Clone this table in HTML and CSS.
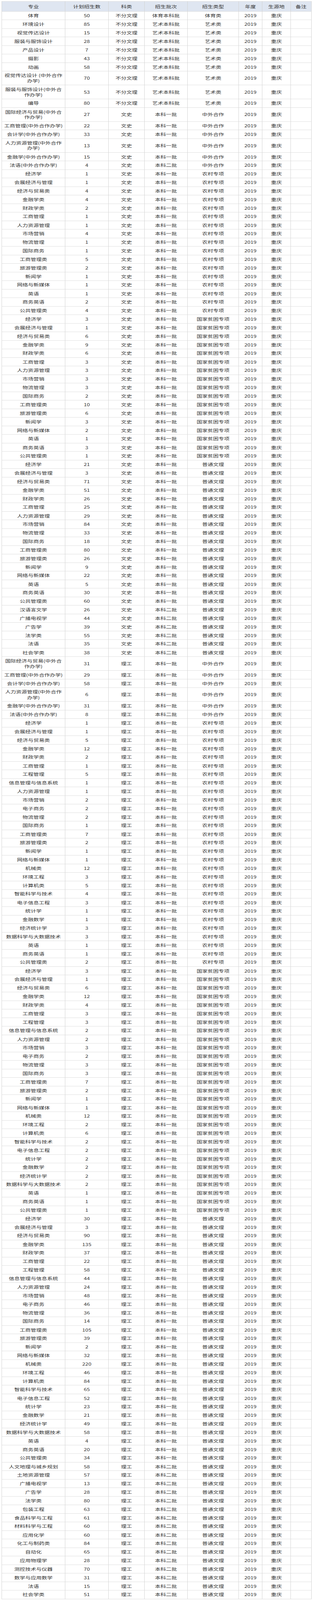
FILE: index.html
```html
<!DOCTYPE html>
<html lang="zh-CN">
<head>
<meta charset="utf-8">
<title>招生计划</title>
<link rel="stylesheet" href="styles.css">
</head>
<body>
<div class="frame">
<div class="sheet">
<table class="plan">
<colgroup>
<col class="c-major"><col class="c-num"><col class="c-cat"><col class="c-batch"><col class="c-type"><col class="c-year"><col class="c-src"><col class="c-note">
</colgroup>
<thead>
<tr><th>专业</th><th>计划招生数</th><th>科类</th><th>招生批次</th><th>招生类型</th><th>年度</th><th>生源地</th><th>备注</th></tr>
</thead>
<tbody>
<tr><td>体育</td><td>50</td><td>不分文理</td><td>体育本科批</td><td>体育类</td><td>2019</td><td>重庆</td><td></td></tr>
<tr><td>环境设计</td><td>85</td><td>不分文理</td><td>艺术本科批</td><td>艺术类</td><td>2019</td><td>重庆</td><td></td></tr>
<tr><td>视觉传达设计</td><td>15</td><td>不分文理</td><td>艺术本科批</td><td>艺术类</td><td>2019</td><td>重庆</td><td></td></tr>
<tr><td>服装与服饰设计</td><td>28</td><td>不分文理</td><td>艺术本科批</td><td>艺术类</td><td>2019</td><td>重庆</td><td></td></tr>
<tr><td>产品设计</td><td>7</td><td>不分文理</td><td>艺术本科批</td><td>艺术类</td><td>2019</td><td>重庆</td><td></td></tr>
<tr><td>摄影</td><td>43</td><td>不分文理</td><td>艺术本科批</td><td>艺术类</td><td>2019</td><td>重庆</td><td></td></tr>
<tr><td>动画</td><td>58</td><td>不分文理</td><td>艺术本科批</td><td>艺术类</td><td>2019</td><td>重庆</td><td></td></tr>
<tr><td>视觉传达设计 (中外合作办学)</td><td>70</td><td>不分文理</td><td>艺术本科批</td><td>艺术类</td><td>2019</td><td>重庆</td><td></td></tr>
<tr><td>服装与服饰设计(中外合作办学)</td><td>53</td><td>不分文理</td><td>艺术本科批</td><td>艺术类</td><td>2019</td><td>重庆</td><td></td></tr>
<tr><td>编导</td><td>80</td><td>不分文理</td><td>艺术本科批</td><td>艺术类</td><td>2019</td><td>重庆</td><td></td></tr>
<tr><td>国际经济与贸易(中外合作办学)</td><td>27</td><td>文史</td><td>本科一批</td><td>中外合作</td><td>2019</td><td>重庆</td><td></td></tr>
<tr><td>工商管理(中外合作办学)</td><td>22</td><td>文史</td><td>本科一批</td><td>中外合作</td><td>2019</td><td>重庆</td><td></td></tr>
<tr><td>会计学(中外合作办学)</td><td>33</td><td>文史</td><td>本科一批</td><td>中外合作</td><td>2019</td><td>重庆</td><td></td></tr>
<tr><td>人力资源管理(中外合作办学)</td><td>13</td><td>文史</td><td>本科一批</td><td>中外合作</td><td>2019</td><td>重庆</td><td></td></tr>
<tr><td>金融学(中外合作办学)</td><td>15</td><td>文史</td><td>本科一批</td><td>中外合作</td><td>2019</td><td>重庆</td><td></td></tr>
<tr><td>法语(中外合作办学)</td><td>4</td><td>文史</td><td>本科二批</td><td>中外合作</td><td>2019</td><td>重庆</td><td></td></tr>
<tr><td>经济学</td><td>1</td><td>文史</td><td>本科一批</td><td>农村专项</td><td>2019</td><td>重庆</td><td></td></tr>
<tr><td>会展经济与管理</td><td>1</td><td>文史</td><td>本科一批</td><td>农村专项</td><td>2019</td><td>重庆</td><td></td></tr>
<tr><td>经济与贸易类</td><td>4</td><td>文史</td><td>本科一批</td><td>农村专项</td><td>2019</td><td>重庆</td><td></td></tr>
<tr><td>金融学类</td><td>4</td><td>文史</td><td>本科一批</td><td>农村专项</td><td>2019</td><td>重庆</td><td></td></tr>
<tr><td>财政学类</td><td>2</td><td>文史</td><td>本科一批</td><td>农村专项</td><td>2019</td><td>重庆</td><td></td></tr>
<tr><td>工商管理</td><td>1</td><td>文史</td><td>本科一批</td><td>农村专项</td><td>2019</td><td>重庆</td><td></td></tr>
<tr><td>人力资源管理</td><td>1</td><td>文史</td><td>本科一批</td><td>农村专项</td><td>2019</td><td>重庆</td><td></td></tr>
<tr><td>市场营销</td><td>4</td><td>文史</td><td>本科一批</td><td>农村专项</td><td>2019</td><td>重庆</td><td></td></tr>
<tr><td>物流管理</td><td>1</td><td>文史</td><td>本科一批</td><td>农村专项</td><td>2019</td><td>重庆</td><td></td></tr>
<tr><td>国际商务</td><td>1</td><td>文史</td><td>本科一批</td><td>农村专项</td><td>2019</td><td>重庆</td><td></td></tr>
<tr><td>工商管理类</td><td>5</td><td>文史</td><td>本科一批</td><td>农村专项</td><td>2019</td><td>重庆</td><td></td></tr>
<tr><td>旅游管理类</td><td>2</td><td>文史</td><td>本科一批</td><td>农村专项</td><td>2019</td><td>重庆</td><td></td></tr>
<tr><td>新闻学</td><td>1</td><td>文史</td><td>本科一批</td><td>农村专项</td><td>2019</td><td>重庆</td><td></td></tr>
<tr><td>网络与新媒体</td><td>1</td><td>文史</td><td>本科一批</td><td>农村专项</td><td>2019</td><td>重庆</td><td></td></tr>
<tr><td>英语</td><td>1</td><td>文史</td><td>本科一批</td><td>农村专项</td><td>2019</td><td>重庆</td><td></td></tr>
<tr><td>商务英语</td><td>2</td><td>文史</td><td>本科一批</td><td>农村专项</td><td>2019</td><td>重庆</td><td></td></tr>
<tr><td>公共管理类</td><td>4</td><td>文史</td><td>本科一批</td><td>农村专项</td><td>2019</td><td>重庆</td><td></td></tr>
<tr><td>经济学</td><td>3</td><td>文史</td><td>本科一批</td><td>国家贫困专项</td><td>2019</td><td>重庆</td><td></td></tr>
<tr><td>会展经济与管理</td><td>1</td><td>文史</td><td>本科一批</td><td>国家贫困专项</td><td>2019</td><td>重庆</td><td></td></tr>
<tr><td>经济与贸易类</td><td>6</td><td>文史</td><td>本科一批</td><td>国家贫困专项</td><td>2019</td><td>重庆</td><td></td></tr>
<tr><td>金融学类</td><td>9</td><td>文史</td><td>本科一批</td><td>国家贫困专项</td><td>2019</td><td>重庆</td><td></td></tr>
<tr><td>财政学类</td><td>6</td><td>文史</td><td>本科一批</td><td>国家贫困专项</td><td>2019</td><td>重庆</td><td></td></tr>
<tr><td>工商管理</td><td>3</td><td>文史</td><td>本科一批</td><td>国家贫困专项</td><td>2019</td><td>重庆</td><td></td></tr>
<tr><td>人力资源管理</td><td>3</td><td>文史</td><td>本科一批</td><td>国家贫困专项</td><td>2019</td><td>重庆</td><td></td></tr>
<tr><td>市场营销</td><td>3</td><td>文史</td><td>本科一批</td><td>国家贫困专项</td><td>2019</td><td>重庆</td><td></td></tr>
<tr><td>物流管理</td><td>3</td><td>文史</td><td>本科一批</td><td>国家贫困专项</td><td>2019</td><td>重庆</td><td></td></tr>
<tr><td>国际商务</td><td>2</td><td>文史</td><td>本科一批</td><td>国家贫困专项</td><td>2019</td><td>重庆</td><td></td></tr>
<tr><td>工商管理类</td><td>10</td><td>文史</td><td>本科一批</td><td>国家贫困专项</td><td>2019</td><td>重庆</td><td></td></tr>
<tr><td>旅游管理类</td><td>6</td><td>文史</td><td>本科一批</td><td>国家贫困专项</td><td>2019</td><td>重庆</td><td></td></tr>
<tr><td>新闻学</td><td>3</td><td>文史</td><td>本科一批</td><td>国家贫困专项</td><td>2019</td><td>重庆</td><td></td></tr>
<tr><td>网络与新媒体</td><td>2</td><td>文史</td><td>本科一批</td><td>国家贫困专项</td><td>2019</td><td>重庆</td><td></td></tr>
<tr><td>英语</td><td>1</td><td>文史</td><td>本科一批</td><td>国家贫困专项</td><td>2019</td><td>重庆</td><td></td></tr>
<tr><td>商务英语</td><td>3</td><td>文史</td><td>本科一批</td><td>国家贫困专项</td><td>2019</td><td>重庆</td><td></td></tr>
<tr><td>公共管理类</td><td>1</td><td>文史</td><td>本科一批</td><td>国家贫困专项</td><td>2019</td><td>重庆</td><td></td></tr>
<tr><td>经济学</td><td>21</td><td>文史</td><td>本科一批</td><td>普通文理</td><td>2019</td><td>重庆</td><td></td></tr>
<tr><td>会展经济与管理</td><td>3</td><td>文史</td><td>本科一批</td><td>普通文理</td><td>2019</td><td>重庆</td><td></td></tr>
<tr><td>经济与贸易类</td><td>71</td><td>文史</td><td>本科一批</td><td>普通文理</td><td>2019</td><td>重庆</td><td></td></tr>
<tr><td>金融学类</td><td>51</td><td>文史</td><td>本科一批</td><td>普通文理</td><td>2019</td><td>重庆</td><td></td></tr>
<tr><td>财政学类</td><td>26</td><td>文史</td><td>本科一批</td><td>普通文理</td><td>2019</td><td>重庆</td><td></td></tr>
<tr><td>工商管理</td><td>25</td><td>文史</td><td>本科一批</td><td>普通文理</td><td>2019</td><td>重庆</td><td></td></tr>
<tr><td>人力资源管理</td><td>29</td><td>文史</td><td>本科一批</td><td>普通文理</td><td>2019</td><td>重庆</td><td></td></tr>
<tr><td>市场营销</td><td>84</td><td>文史</td><td>本科一批</td><td>普通文理</td><td>2019</td><td>重庆</td><td></td></tr>
<tr><td>物流管理</td><td>33</td><td>文史</td><td>本科一批</td><td>普通文理</td><td>2019</td><td>重庆</td><td></td></tr>
<tr><td>国际商务</td><td>18</td><td>文史</td><td>本科一批</td><td>普通文理</td><td>2019</td><td>重庆</td><td></td></tr>
<tr><td>工商管理类</td><td>80</td><td>文史</td><td>本科一批</td><td>普通文理</td><td>2019</td><td>重庆</td><td></td></tr>
<tr><td>旅游管理类</td><td>26</td><td>文史</td><td>本科一批</td><td>普通文理</td><td>2019</td><td>重庆</td><td></td></tr>
<tr><td>新闻学</td><td>9</td><td>文史</td><td>本科一批</td><td>普通文理</td><td>2019</td><td>重庆</td><td></td></tr>
<tr><td>网络与新媒体</td><td>22</td><td>文史</td><td>本科一批</td><td>普通文理</td><td>2019</td><td>重庆</td><td></td></tr>
<tr><td>英语</td><td>5</td><td>文史</td><td>本科一批</td><td>普通文理</td><td>2019</td><td>重庆</td><td></td></tr>
<tr><td>商务英语</td><td>30</td><td>文史</td><td>本科一批</td><td>普通文理</td><td>2019</td><td>重庆</td><td></td></tr>
<tr><td>公共管理类</td><td>60</td><td>文史</td><td>本科一批</td><td>普通文理</td><td>2019</td><td>重庆</td><td></td></tr>
<tr><td>汉语言文学</td><td>26</td><td>文史</td><td>本科二批</td><td>普通文理</td><td>2019</td><td>重庆</td><td></td></tr>
<tr><td>广播电视学</td><td>44</td><td>文史</td><td>本科二批</td><td>普通文理</td><td>2019</td><td>重庆</td><td></td></tr>
<tr><td>广告学</td><td>39</td><td>文史</td><td>本科二批</td><td>普通文理</td><td>2019</td><td>重庆</td><td></td></tr>
<tr><td>法学类</td><td>55</td><td>文史</td><td>本科二批</td><td>普通文理</td><td>2019</td><td>重庆</td><td></td></tr>
<tr><td>法语</td><td>35</td><td>文史</td><td>本科二批</td><td>普通文理</td><td>2019</td><td>重庆</td><td></td></tr>
<tr><td>社会学类</td><td>38</td><td>文史</td><td>本科二批</td><td>普通文理</td><td>2019</td><td>重庆</td><td></td></tr>
<tr><td>国际经济与贸易(中外合作办学)</td><td>31</td><td>理工</td><td>本科一批</td><td>中外合作</td><td>2019</td><td>重庆</td><td></td></tr>
<tr><td>工商管理(中外合作办学)</td><td>29</td><td>理工</td><td>本科一批</td><td>中外合作</td><td>2019</td><td>重庆</td><td></td></tr>
<tr><td>会计学(中外合作办学)</td><td>58</td><td>理工</td><td>本科一批</td><td>中外合作</td><td>2019</td><td>重庆</td><td></td></tr>
<tr><td>人力资源管理(中外合作办学)</td><td>6</td><td>理工</td><td>本科一批</td><td>中外合作</td><td>2019</td><td>重庆</td><td></td></tr>
<tr><td>金融学(中外合作办学)</td><td>31</td><td>理工</td><td>本科一批</td><td>中外合作</td><td>2019</td><td>重庆</td><td></td></tr>
<tr><td>法语(中外合作办学)</td><td>8</td><td>理工</td><td>本科二批</td><td>中外合作</td><td>2019</td><td>重庆</td><td></td></tr>
<tr><td>经济学</td><td>1</td><td>理工</td><td>本科一批</td><td>农村专项</td><td>2019</td><td>重庆</td><td></td></tr>
<tr><td>会展经济与管理</td><td>1</td><td>理工</td><td>本科一批</td><td>农村专项</td><td>2019</td><td>重庆</td><td></td></tr>
<tr><td>经济与贸易类</td><td>5</td><td>理工</td><td>本科一批</td><td>农村专项</td><td>2019</td><td>重庆</td><td></td></tr>
<tr><td>金融学类</td><td>12</td><td>理工</td><td>本科一批</td><td>农村专项</td><td>2019</td><td>重庆</td><td></td></tr>
<tr><td>财政学类</td><td>2</td><td>理工</td><td>本科一批</td><td>农村专项</td><td>2019</td><td>重庆</td><td></td></tr>
<tr><td>工商管理</td><td>1</td><td>理工</td><td>本科一批</td><td>农村专项</td><td>2019</td><td>重庆</td><td></td></tr>
<tr><td>工程管理</td><td>5</td><td>理工</td><td>本科一批</td><td>农村专项</td><td>2019</td><td>重庆</td><td></td></tr>
<tr><td>信息管理与信息系统</td><td>1</td><td>理工</td><td>本科一批</td><td>农村专项</td><td>2019</td><td>重庆</td><td></td></tr>
<tr><td>人力资源管理</td><td>1</td><td>理工</td><td>本科一批</td><td>农村专项</td><td>2019</td><td>重庆</td><td></td></tr>
<tr><td>市场营销</td><td>2</td><td>理工</td><td>本科一批</td><td>农村专项</td><td>2019</td><td>重庆</td><td></td></tr>
<tr><td>电子商务</td><td>2</td><td>理工</td><td>本科一批</td><td>农村专项</td><td>2019</td><td>重庆</td><td></td></tr>
<tr><td>物流管理</td><td>2</td><td>理工</td><td>本科一批</td><td>农村专项</td><td>2019</td><td>重庆</td><td></td></tr>
<tr><td>国际商务</td><td>1</td><td>理工</td><td>本科一批</td><td>农村专项</td><td>2019</td><td>重庆</td><td></td></tr>
<tr><td>工商管理类</td><td>7</td><td>理工</td><td>本科一批</td><td>农村专项</td><td>2019</td><td>重庆</td><td></td></tr>
<tr><td>旅游管理类</td><td>2</td><td>理工</td><td>本科一批</td><td>农村专项</td><td>2019</td><td>重庆</td><td></td></tr>
<tr><td>新闻学</td><td>1</td><td>理工</td><td>本科一批</td><td>农村专项</td><td>2019</td><td>重庆</td><td></td></tr>
<tr><td>网络与新媒体</td><td>1</td><td>理工</td><td>本科一批</td><td>农村专项</td><td>2019</td><td>重庆</td><td></td></tr>
<tr><td>机械类</td><td>12</td><td>理工</td><td>本科一批</td><td>农村专项</td><td>2019</td><td>重庆</td><td></td></tr>
<tr><td>环境工程</td><td>3</td><td>理工</td><td>本科一批</td><td>农村专项</td><td>2019</td><td>重庆</td><td></td></tr>
<tr><td>计算机类</td><td>5</td><td>理工</td><td>本科一批</td><td>农村专项</td><td>2019</td><td>重庆</td><td></td></tr>
<tr><td>智能科学与技术</td><td>4</td><td>理工</td><td>本科一批</td><td>农村专项</td><td>2019</td><td>重庆</td><td></td></tr>
<tr><td>电子信息工程</td><td>3</td><td>理工</td><td>本科一批</td><td>农村专项</td><td>2019</td><td>重庆</td><td></td></tr>
<tr><td>统计学</td><td>1</td><td>理工</td><td>本科一批</td><td>农村专项</td><td>2019</td><td>重庆</td><td></td></tr>
<tr><td>金融数学</td><td>1</td><td>理工</td><td>本科一批</td><td>农村专项</td><td>2019</td><td>重庆</td><td></td></tr>
<tr><td>经济统计学</td><td>3</td><td>理工</td><td>本科一批</td><td>农村专项</td><td>2019</td><td>重庆</td><td></td></tr>
<tr><td>数据科学与大数据技术</td><td>3</td><td>理工</td><td>本科一批</td><td>农村专项</td><td>2019</td><td>重庆</td><td></td></tr>
<tr><td>英语</td><td>1</td><td>理工</td><td>本科一批</td><td>农村专项</td><td>2019</td><td>重庆</td><td></td></tr>
<tr><td>商务英语</td><td>1</td><td>理工</td><td>本科一批</td><td>农村专项</td><td>2019</td><td>重庆</td><td></td></tr>
<tr><td>公共管理类</td><td>2</td><td>理工</td><td>本科一批</td><td>农村专项</td><td>2019</td><td>重庆</td><td></td></tr>
<tr><td>经济学</td><td>3</td><td>理工</td><td>本科一批</td><td>国家贫困专项</td><td>2019</td><td>重庆</td><td></td></tr>
<tr><td>会展经济与管理</td><td>1</td><td>理工</td><td>本科一批</td><td>国家贫困专项</td><td>2019</td><td>重庆</td><td></td></tr>
<tr><td>经济与贸易类</td><td>6</td><td>理工</td><td>本科一批</td><td>国家贫困专项</td><td>2019</td><td>重庆</td><td></td></tr>
<tr><td>金融学类</td><td>12</td><td>理工</td><td>本科一批</td><td>国家贫困专项</td><td>2019</td><td>重庆</td><td></td></tr>
<tr><td>财政学类</td><td>4</td><td>理工</td><td>本科一批</td><td>国家贫困专项</td><td>2019</td><td>重庆</td><td></td></tr>
<tr><td>工商管理</td><td>3</td><td>理工</td><td>本科一批</td><td>国家贫困专项</td><td>2019</td><td>重庆</td><td></td></tr>
<tr><td>工程管理</td><td>3</td><td>理工</td><td>本科一批</td><td>国家贫困专项</td><td>2019</td><td>重庆</td><td></td></tr>
<tr><td>信息管理与信息系统</td><td>2</td><td>理工</td><td>本科一批</td><td>国家贫困专项</td><td>2019</td><td>重庆</td><td></td></tr>
<tr><td>人力资源管理</td><td>2</td><td>理工</td><td>本科一批</td><td>国家贫困专项</td><td>2019</td><td>重庆</td><td></td></tr>
<tr><td>市场营销</td><td>3</td><td>理工</td><td>本科一批</td><td>国家贫困专项</td><td>2019</td><td>重庆</td><td></td></tr>
<tr><td>电子商务</td><td>2</td><td>理工</td><td>本科一批</td><td>国家贫困专项</td><td>2019</td><td>重庆</td><td></td></tr>
<tr><td>物流管理</td><td>3</td><td>理工</td><td>本科一批</td><td>国家贫困专项</td><td>2019</td><td>重庆</td><td></td></tr>
<tr><td>国际商务</td><td>3</td><td>理工</td><td>本科一批</td><td>国家贫困专项</td><td>2019</td><td>重庆</td><td></td></tr>
<tr><td>工商管理类</td><td>7</td><td>理工</td><td>本科一批</td><td>国家贫困专项</td><td>2019</td><td>重庆</td><td></td></tr>
<tr><td>旅游管理类</td><td>2</td><td>理工</td><td>本科一批</td><td>国家贫困专项</td><td>2019</td><td>重庆</td><td></td></tr>
<tr><td>新闻学</td><td>1</td><td>理工</td><td>本科一批</td><td>国家贫困专项</td><td>2019</td><td>重庆</td><td></td></tr>
<tr><td>网络与新媒体</td><td>1</td><td>理工</td><td>本科一批</td><td>国家贫困专项</td><td>2019</td><td>重庆</td><td></td></tr>
<tr><td>机械类</td><td>12</td><td>理工</td><td>本科一批</td><td>国家贫困专项</td><td>2019</td><td>重庆</td><td></td></tr>
<tr><td>环境工程</td><td>2</td><td>理工</td><td>本科一批</td><td>国家贫困专项</td><td>2019</td><td>重庆</td><td></td></tr>
<tr><td>计算机类</td><td>6</td><td>理工</td><td>本科一批</td><td>国家贫困专项</td><td>2019</td><td>重庆</td><td></td></tr>
<tr><td>智能科学与技术</td><td>2</td><td>理工</td><td>本科一批</td><td>国家贫困专项</td><td>2019</td><td>重庆</td><td></td></tr>
<tr><td>电子信息工程</td><td>2</td><td>理工</td><td>本科一批</td><td>国家贫困专项</td><td>2019</td><td>重庆</td><td></td></tr>
<tr><td>统计学</td><td>2</td><td>理工</td><td>本科一批</td><td>国家贫困专项</td><td>2019</td><td>重庆</td><td></td></tr>
<tr><td>金融数学</td><td>2</td><td>理工</td><td>本科一批</td><td>国家贫困专项</td><td>2019</td><td>重庆</td><td></td></tr>
<tr><td>经济统计学</td><td>2</td><td>理工</td><td>本科一批</td><td>国家贫困专项</td><td>2019</td><td>重庆</td><td></td></tr>
<tr><td>数据科学与大数据技术</td><td>2</td><td>理工</td><td>本科一批</td><td>国家贫困专项</td><td>2019</td><td>重庆</td><td></td></tr>
<tr><td>英语</td><td>1</td><td>理工</td><td>本科一批</td><td>国家贫困专项</td><td>2019</td><td>重庆</td><td></td></tr>
<tr><td>商务英语</td><td>1</td><td>理工</td><td>本科一批</td><td>国家贫困专项</td><td>2019</td><td>重庆</td><td></td></tr>
<tr><td>公共管理类</td><td>1</td><td>理工</td><td>本科一批</td><td>国家贫困专项</td><td>2019</td><td>重庆</td><td></td></tr>
<tr><td>经济学</td><td>30</td><td>理工</td><td>本科一批</td><td>普通文理</td><td>2019</td><td>重庆</td><td></td></tr>
<tr><td>会展经济与管理</td><td>3</td><td>理工</td><td>本科一批</td><td>普通文理</td><td>2019</td><td>重庆</td><td></td></tr>
<tr><td>经济与贸易类</td><td>90</td><td>理工</td><td>本科一批</td><td>普通文理</td><td>2019</td><td>重庆</td><td></td></tr>
<tr><td>金融学类</td><td>135</td><td>理工</td><td>本科一批</td><td>普通文理</td><td>2019</td><td>重庆</td><td></td></tr>
<tr><td>财政学类</td><td>37</td><td>理工</td><td>本科一批</td><td>普通文理</td><td>2019</td><td>重庆</td><td></td></tr>
<tr><td>工商管理</td><td>22</td><td>理工</td><td>本科一批</td><td>普通文理</td><td>2019</td><td>重庆</td><td></td></tr>
<tr><td>工程管理</td><td>58</td><td>理工</td><td>本科一批</td><td>普通文理</td><td>2019</td><td>重庆</td><td></td></tr>
<tr><td>信息管理与信息系统</td><td>44</td><td>理工</td><td>本科一批</td><td>普通文理</td><td>2019</td><td>重庆</td><td></td></tr>
<tr><td>人力资源管理</td><td>24</td><td>理工</td><td>本科一批</td><td>普通文理</td><td>2019</td><td>重庆</td><td></td></tr>
<tr><td>市场营销</td><td>48</td><td>理工</td><td>本科一批</td><td>普通文理</td><td>2019</td><td>重庆</td><td></td></tr>
<tr><td>电子商务</td><td>46</td><td>理工</td><td>本科一批</td><td>普通文理</td><td>2019</td><td>重庆</td><td></td></tr>
<tr><td>物流管理</td><td>36</td><td>理工</td><td>本科一批</td><td>普通文理</td><td>2019</td><td>重庆</td><td></td></tr>
<tr><td>国际商务</td><td>14</td><td>理工</td><td>本科一批</td><td>普通文理</td><td>2019</td><td>重庆</td><td></td></tr>
<tr><td>工商管理类</td><td>105</td><td>理工</td><td>本科一批</td><td>普通文理</td><td>2019</td><td>重庆</td><td></td></tr>
<tr><td>旅游管理类</td><td>39</td><td>理工</td><td>本科一批</td><td>普通文理</td><td>2019</td><td>重庆</td><td></td></tr>
<tr><td>新闻学</td><td>2</td><td>理工</td><td>本科一批</td><td>普通文理</td><td>2019</td><td>重庆</td><td></td></tr>
<tr><td>网络与新媒体</td><td>32</td><td>理工</td><td>本科一批</td><td>普通文理</td><td>2019</td><td>重庆</td><td></td></tr>
<tr><td>机械类</td><td>220</td><td>理工</td><td>本科一批</td><td>普通文理</td><td>2019</td><td>重庆</td><td></td></tr>
<tr><td>环境工程</td><td>46</td><td>理工</td><td>本科一批</td><td>普通文理</td><td>2019</td><td>重庆</td><td></td></tr>
<tr><td>计算机类</td><td>84</td><td>理工</td><td>本科一批</td><td>普通文理</td><td>2019</td><td>重庆</td><td></td></tr>
<tr><td>智能科学与技术</td><td>65</td><td>理工</td><td>本科一批</td><td>普通文理</td><td>2019</td><td>重庆</td><td></td></tr>
<tr><td>电子信息工程</td><td>52</td><td>理工</td><td>本科一批</td><td>普通文理</td><td>2019</td><td>重庆</td><td></td></tr>
<tr><td>统计学</td><td>23</td><td>理工</td><td>本科一批</td><td>普通文理</td><td>2019</td><td>重庆</td><td></td></tr>
<tr><td>金融数学</td><td>21</td><td>理工</td><td>本科一批</td><td>普通文理</td><td>2019</td><td>重庆</td><td></td></tr>
<tr><td>经济统计学</td><td>49</td><td>理工</td><td>本科一批</td><td>普通文理</td><td>2019</td><td>重庆</td><td></td></tr>
<tr><td>数据科学与大数据技术</td><td>58</td><td>理工</td><td>本科一批</td><td>普通文理</td><td>2019</td><td>重庆</td><td></td></tr>
<tr><td>英语</td><td>4</td><td>理工</td><td>本科一批</td><td>普通文理</td><td>2019</td><td>重庆</td><td></td></tr>
<tr><td>商务英语</td><td>20</td><td>理工</td><td>本科一批</td><td>普通文理</td><td>2019</td><td>重庆</td><td></td></tr>
<tr><td>公共管理类</td><td>34</td><td>理工</td><td>本科一批</td><td>普通文理</td><td>2019</td><td>重庆</td><td></td></tr>
<tr><td>人文地理与城乡规划</td><td>58</td><td>理工</td><td>本科二批</td><td>普通文理</td><td>2019</td><td>重庆</td><td></td></tr>
<tr><td>土地资源管理</td><td>57</td><td>理工</td><td>本科二批</td><td>普通文理</td><td>2019</td><td>重庆</td><td></td></tr>
<tr><td>广播电视学</td><td>13</td><td>理工</td><td>本科二批</td><td>普通文理</td><td>2019</td><td>重庆</td><td></td></tr>
<tr><td>广告学</td><td>28</td><td>理工</td><td>本科二批</td><td>普通文理</td><td>2019</td><td>重庆</td><td></td></tr>
<tr><td>法学类</td><td>80</td><td>理工</td><td>本科二批</td><td>普通文理</td><td>2019</td><td>重庆</td><td></td></tr>
<tr><td>包装工程</td><td>63</td><td>理工</td><td>本科二批</td><td>普通文理</td><td>2019</td><td>重庆</td><td></td></tr>
<tr><td>食品科学与工程</td><td>61</td><td>理工</td><td>本科二批</td><td>普通文理</td><td>2019</td><td>重庆</td><td></td></tr>
<tr><td>材料科学与工程</td><td>60</td><td>理工</td><td>本科二批</td><td>普通文理</td><td>2019</td><td>重庆</td><td></td></tr>
<tr><td>应用化学</td><td>60</td><td>理工</td><td>本科二批</td><td>普通文理</td><td>2019</td><td>重庆</td><td></td></tr>
<tr><td>化工与制药类</td><td>84</td><td>理工</td><td>本科二批</td><td>普通文理</td><td>2019</td><td>重庆</td><td></td></tr>
<tr><td>自动化</td><td>65</td><td>理工</td><td>本科二批</td><td>普通文理</td><td>2019</td><td>重庆</td><td></td></tr>
<tr><td>应用物理学</td><td>28</td><td>理工</td><td>本科二批</td><td>普通文理</td><td>2019</td><td>重庆</td><td></td></tr>
<tr><td>测控技术与仪器</td><td>70</td><td>理工</td><td>本科二批</td><td>普通文理</td><td>2019</td><td>重庆</td><td></td></tr>
<tr><td>数学与应用数学</td><td>31</td><td>理工</td><td>本科二批</td><td>普通文理</td><td>2019</td><td>重庆</td><td></td></tr>
<tr><td>法语</td><td>15</td><td>理工</td><td>本科二批</td><td>普通文理</td><td>2019</td><td>重庆</td><td></td></tr>
<tr><td>社会学类</td><td>51</td><td>理工</td><td>本科二批</td><td>普通文理</td><td>2019</td><td>重庆</td><td></td></tr>
</tbody>
</table>
</div>
</div>
</body>
</html>
```

FILE: styles.css
```css
html {
  background: #ffffff;
}

body {
  margin: 0;
  font-family: "Noto Sans CJK SC", "Microsoft YaHei", sans-serif;
  font-size: 14px;
  color: #333333;
}

/* The capture window is 4096px tall; the 5523px sheet is fitted into it
   so that the whole table is photographed at the reference's proportions. */
.frame {
  height: 4096px;
  overflow: hidden;
}

.sheet {
  padding: 4px 2px 4px 4px;
  transform: scaleY(0.741626);
  transform-origin: 0 0;
}

.plan {
  border-collapse: collapse;
  table-layout: fixed;
  width: 792px;
}

.c-major { width: 162px; }
.c-num { width: 111px; }
.c-cat { width: 92px; }
.c-batch { width: 110px; }
.c-type { width: 131px; }
.c-year { width: 60px; }
.c-src { width: 73px; }
.c-note { width: 53px; }

.plan th,
.plan td {
  border: 1px solid #d3d3d3;
  text-align: center;
  vertical-align: middle;
  padding: 5px 4px;
  line-height: 18.5px;
  font-weight: normal;
}

.plan th {
  background: #dfe6f1;
  padding: 7.5px 4px;
}
```
